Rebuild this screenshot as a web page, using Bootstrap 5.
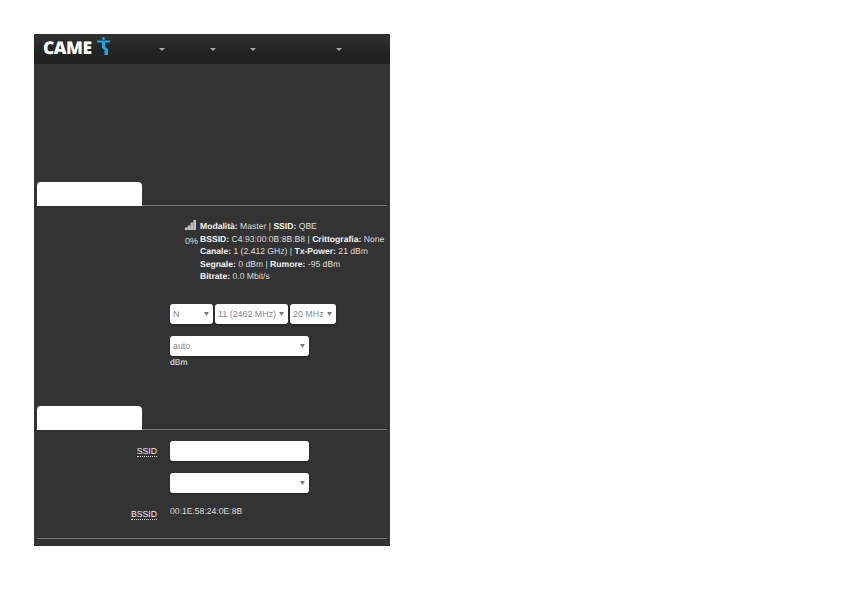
<!DOCTYPE html>
<html lang="it">
<head>
<meta charset="utf-8">
<title>CAME</title>
<link href="https://cdn.jsdelivr.net/npm/bootstrap@5.3.0/dist/css/bootstrap.min.css" rel="stylesheet">
<style>
html,body{background:#fff;height:100%}
body{padding:34px 0 0 34px;font-family:"Liberation Sans",Arial,sans-serif;font-size:9px;color:#eee;line-height:12.5px;text-rendering:geometricPrecision}
.panel-shell{width:356px;height:512px;background:#333}
.top-bar{height:30px;padding:0 0 0 9px;background:linear-gradient(#333,#222 60%,#222)}
.brand-word{font-family:"Open Sans",sans-serif;font-weight:800;font-size:17.5px;line-height:30px;color:#fff;letter-spacing:-.5px;width:52px;margin-top:-2px}
.brand-icon{width:13px;height:18px;margin-left:2px;margin-top:-6px}
.menu-caret{width:0;height:0;border-left:3px solid transparent;border-right:3px solid transparent;border-top:3px solid #aaa;margin-top:1px}
.c1{margin-left:49px}.c2{margin-left:45px}.c3{margin-left:34px}.c4{margin-left:80px}
.hero-gap{height:118px}
.tab-line{margin:0 3px;border-bottom:1px solid #777;height:24px}
.tab-blank{width:105px;height:24px;background:#fff;border-radius:4px 4px 0 0}
.sig-row{padding:14px 0 0 149px}
.sig-col{width:17px;text-align:center;line-height:12px;color:#ddd;flex:none}
.sig-bars{display:block;margin:0 auto 5px 2px}
.sig-text{color:#ddd;white-space:nowrap;font-size:8.6px}
.sig-text b{color:#f2f2f2}
.form-area{padding-left:136px}
.pick{height:20px;padding:0 0 0 3px;font-size:8.9px;line-height:20px;color:#888;border:0;border-radius:3px;background-color:#fff;background-image:url("data:image/svg+xml,%3Csvg xmlns='http://www.w3.org/2000/svg' viewBox='0 0 6 5'%3E%3Cpath fill='%23777' d='M0 0h6L3 5z'/%3E%3C/svg%3E");background-size:5px 4px;background-position:right 4px center;box-shadow:0 1px 2px rgba(0,0,0,.35)}
.w-n{width:43px}.w-ch{width:73px}.w-bw{width:46px}.w-wide{width:139px}
.row-tri{margin-top:21px;gap:2px}
.row-auto{margin-top:12px}
.hint{font-size:8.5px;line-height:12px;color:#eee;margin-top:0}
.gap-b{height:38px}
.field{height:20px;width:139px;border:0;border-radius:3px;background:#fff;box-shadow:0 1px 2px rgba(0,0,0,.35)}
.lab{width:123px;margin-right:13px;text-align:right;font-size:8.7px;line-height:20px;color:#eee;flex:none}
.lab span{border-bottom:1px dotted #ddd;line-height:10px;display:inline-block}
.mt-a{margin-top:11px}
.mt-b{margin-top:12px}
.mt-c{margin-top:11px}
.mac{font-size:8.6px;line-height:14px;color:#ddd}
.end-rule{margin:14px 3px 0;border-top:1px solid #777}
</style>
</head>
<body>
<div class="panel-shell">
  <nav class="top-bar d-flex align-items-center">
    <span class="brand-word">CAME</span>
    <svg class="brand-icon" viewBox="0 0 13 18"><circle cx="6.500" cy="1.500" r="1.500" fill="#1ea5e0"/><path fill="#1ea5e0" d="M0 3.500h13v2H8.200V10l2.800 2v6H7.500v-4.800L5 11V5.500H0z"/></svg>
    <span class="menu-caret c1"></span><span class="menu-caret c2"></span><span class="menu-caret c3"></span><span class="menu-caret c4"></span>
  </nav>
  <div class="hero-gap"></div>
  <div class="tab-line"><div class="tab-blank"></div></div>
  <div class="sig-row d-flex">
    <div class="sig-col">
      <svg class="sig-bars" width="11" height="10" viewBox="0 0 11 10"><path fill="#c4c4c4" d="M0 7.500h2.500V10H0zM2.800 5.500h2.500V10H2.800zM5.600 2.500h2.500V10H5.600zM8.400 0H11v10H8.400z"/></svg>
      <div>0%</div>
    </div>
    <div class="sig-text">
      <div><b>Modalità:</b> Master | <b>SSID:</b> QBE</div>
      <div><b>BSSID:</b> C4:93:00:0B:8B:B8 | <b>Crittografia:</b> None</div>
      <div><b>Canale:</b> 1 (2.412 GHz) | <b>Tx-Power:</b> 21 dBm</div>
      <div><b>Segnale:</b> 0 dBm | <b>Rumore:</b> -95 dBm</div>
      <div><b>Bitrate:</b> 0.0 Mbit/s</div>
    </div>
  </div>
  <div class="form-area">
    <div class="row-tri d-flex">
      <select class="form-select pick w-n"><option>N</option></select>
      <select class="form-select pick w-ch"><option>11 (2462 MHz)</option></select>
      <select class="form-select pick w-bw"><option>20 MHz</option></select>
    </div>
    <div class="row-auto"><select class="form-select pick w-wide"><option>auto</option></select></div>
    <div class="hint">dBm</div>
  </div>
  <div class="gap-b"></div>
  <div class="tab-line"><div class="tab-blank"></div></div>
  <div class="d-flex mt-a"><div class="lab"><span>SSID</span></div><input class="field" type="text"></div>
  <div class="d-flex mt-b"><div class="lab"></div><select class="form-select pick w-wide"><option></option></select></div>
  <div class="d-flex mt-c"><div class="lab"><span>BSSID</span></div><div class="mac">00:1E:58:24:0E:8B</div></div>
  <div class="end-rule"></div>
</div>
<script src="https://cdn.jsdelivr.net/npm/bootstrap@5.3.0/dist/js/bootstrap.bundle.min.js"></script>
</body>
</html>
